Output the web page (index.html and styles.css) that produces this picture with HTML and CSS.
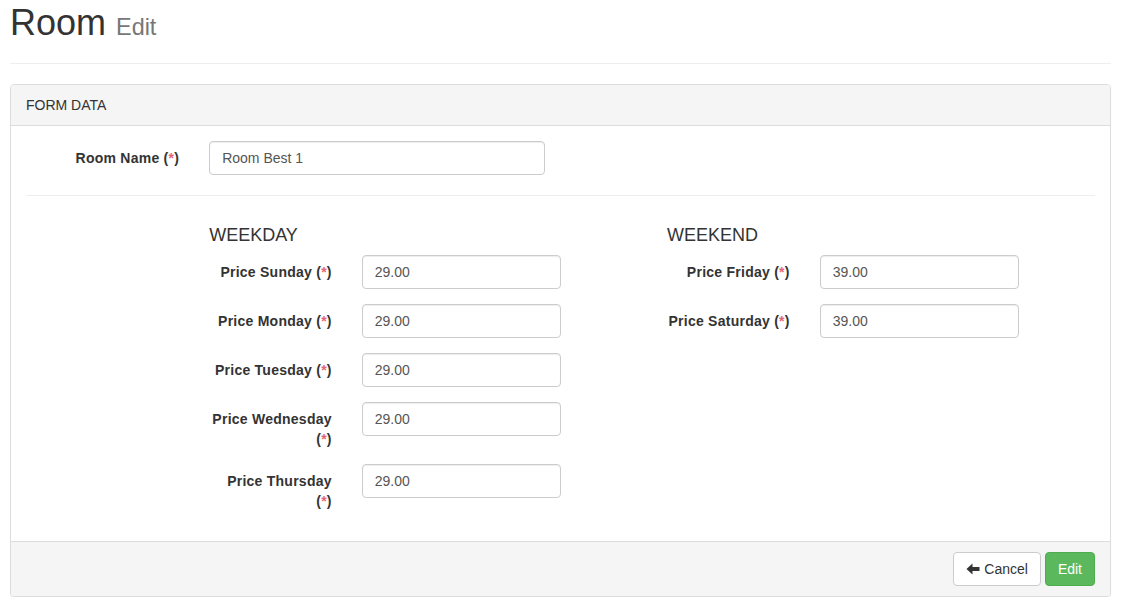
FILE: index.html
```html
<!DOCTYPE html>
<html>
<head>
<meta charset="utf-8">
<link rel="stylesheet" href="styles.css">
</head>
<body>
<div class="wrapper">
  <div class="page-header">
    <h1>Room <small>Edit</small></h1>
  </div>
  <div class="panel">
    <div class="panel-heading">FORM DATA</div>
    <div class="panel-body">
      <div class="row form-group">
        <label class="col-2 control-label">Room Name (<span class="req">*</span>)</label>
        <div class="col-4"><input class="form-control" type="text" value="Room Best 1"></div>
      </div>
      <hr class="sep">
      <div class="row">
        <div class="col-5 offset-2">
          <h4>WEEKDAY</h4>
          <div class="row form-group">
            <label class="col-4 control-label">Price Sunday (<span class="req">*</span>)</label>
            <div class="col-6"><input class="form-control" type="text" value="29.00"></div>
          </div>
          <div class="row form-group">
            <label class="col-4 control-label">Price Monday (<span class="req">*</span>)</label>
            <div class="col-6"><input class="form-control" type="text" value="29.00"></div>
          </div>
          <div class="row form-group">
            <label class="col-4 control-label">Price Tuesday (<span class="req">*</span>)</label>
            <div class="col-6"><input class="form-control" type="text" value="29.00"></div>
          </div>
          <div class="row form-group">
            <label class="col-4 control-label">Price Wednesday (<span class="req">*</span>)</label>
            <div class="col-6"><input class="form-control" type="text" value="29.00"></div>
          </div>
          <div class="row form-group">
            <label class="col-4 control-label">Price Thursday (<span class="req">*</span>)</label>
            <div class="col-6"><input class="form-control" type="text" value="29.00"></div>
          </div>
        </div>
        <div class="col-5">
          <h4>WEEKEND</h4>
          <div class="row form-group">
            <label class="col-4 control-label">Price Friday (<span class="req">*</span>)</label>
            <div class="col-6"><input class="form-control" type="text" value="39.00"></div>
          </div>
          <div class="row form-group">
            <label class="col-4 control-label">Price Saturday (<span class="req">*</span>)</label>
            <div class="col-6"><input class="form-control" type="text" value="39.00"></div>
          </div>
        </div>
      </div>
    </div>
    <div class="panel-footer">
      <button class="btn btn-default" type="button"><svg class="icon" viewBox="0 0 14 14" width="14" height="14"><path d="M0.5 7 L6.5 1.5 V5 H13.5 V9 H6.5 V12.5 Z" fill="#333"/></svg> Cancel</button>
      <button class="btn btn-success" type="button">Edit</button>
    </div>
  </div>
</div>
</body>
</html>
```
FILE: styles.css
```css
* { box-sizing: border-box; }
html, body { margin: 0; padding: 0; }
body {
  font-family: "Liberation Sans", Arial, Helvetica, sans-serif;
  font-size: 14px;
  line-height: 1.42857143;
  color: #333;
  background: #fff;
}
.wrapper {
  padding: 0 17px 0 10px;
}
.page-header {
  margin: 0 0 20px;
  padding: 3px 0 20px;
  border-bottom: 1px solid #eee;
}
.page-header h1 {
  margin: 0;
  font-size: 36px;
  font-weight: 500;
  line-height: 1.1;
  color: #333;
}
.page-header h1 small {
  font-size: 65%;
  font-weight: 400;
  color: #777;
}
.panel {
  border: 1px solid #ddd;
  border-radius: 4px;
  background: #fff;
  box-shadow: 0 1px 1px rgba(0,0,0,.05);
}
.panel-heading {
  padding: 10px 15px;
  background: #f5f5f5;
  border-bottom: 1px solid #ddd;
  border-radius: 3px 3px 0 0;
  color: #333;
}
.panel-body {
  padding: 15px;
}
.panel-footer {
  padding: 10px 15px;
  background: #f5f5f5;
  border-top: 1px solid #ddd;
  border-radius: 0 0 3px 3px;
  display: flex;
  justify-content: flex-end;
  gap: 4px;
}
.row {
  display: flex;
  margin: 0 -15px;
}
.form-group { margin-bottom: 15px; }
.col-2, .col-4, .col-5, .col-6 {
  padding: 0 15px;
  flex: none;
}
.col-2 { width: 16.66666667%; }
.col-4 { width: 33.33333333%; }
.col-5 { width: 41.66666667%; }
.col-6 { width: 50%; }
.offset-2 { margin-left: 16.66666667%; }
.control-label {
  display: block;
  text-align: right;
  font-weight: 700;
  padding-top: 7px;
  letter-spacing: 0.25px;
}
.req { color: #e56478; }
.form-control {
  display: block;
  width: 100%;
  height: 34px;
  padding: 6px 12px;
  font-family: inherit;
  font-size: 14px;
  line-height: 1.42857143;
  color: #555;
  background: #fff;
  border: 1px solid #ccc;
  border-radius: 4px;
  box-shadow: inset 0 1px 1px rgba(0,0,0,.075);
  outline: none;
}
hr.sep {
  margin: 20px 0;
  border: 0;
  border-top: 1px solid #eee;
}
h4 {
  margin: 10px 0;
  font-size: 18px;
  font-weight: 500;
  line-height: 1.1;
}
.btn {
  display: inline-flex;
  align-items: center;
  gap: 4px;
  height: 34px;
  padding: 6px 12px;
  font-family: inherit;
  font-size: 14px;
  line-height: 1.42857143;
  border: 1px solid transparent;
  border-radius: 4px;
  cursor: pointer;
}
.btn-default {
  color: #333;
  background: #fff;
  border-color: #ccc;
}
.btn-success {
  color: #fff;
  background: #5cb85c;
  border-color: #4cae4c;
}
.icon { display: block; }
```
